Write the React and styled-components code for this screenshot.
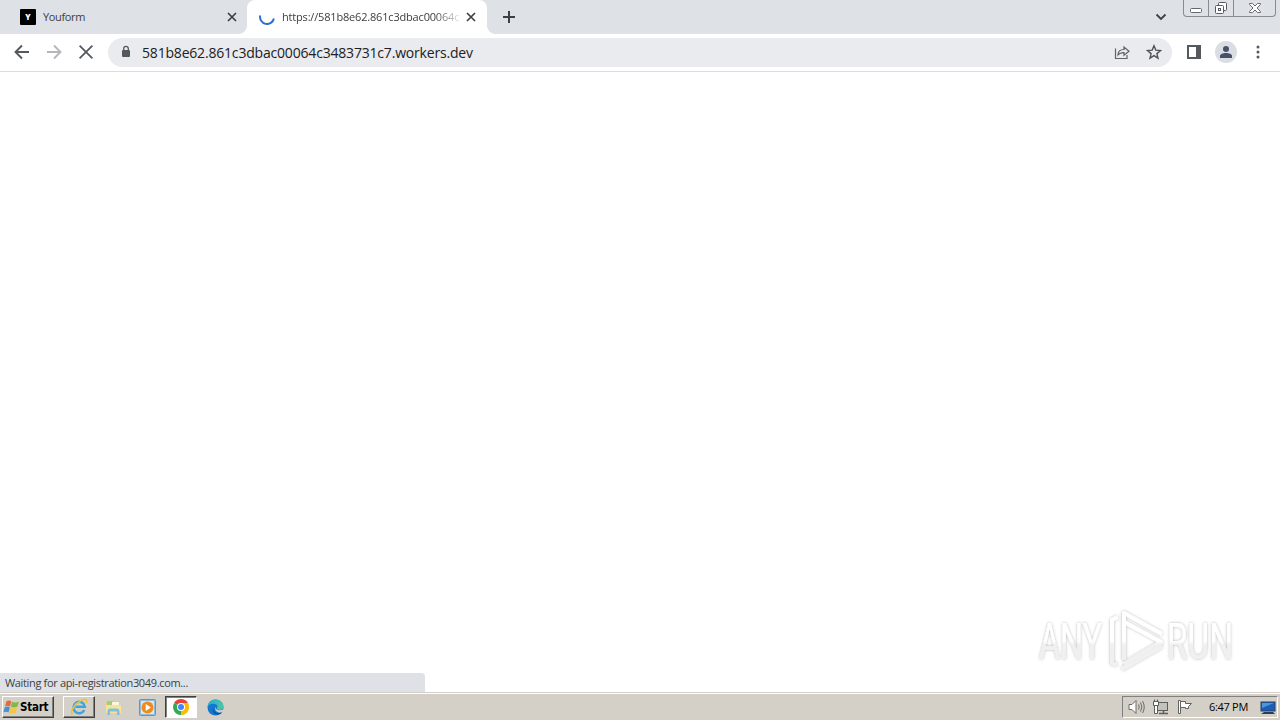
import styled, { createGlobalStyle } from 'styled-components';

const GlobalStyle = createGlobalStyle`
    * {
        box-sizing: border-box;
    }
    body {
        margin: 0;
        overflow: hidden;
        background: #fff;
        font-family: 'Open Sans', 'Noto Sans', sans-serif;
    }
    svg {
        display: block;
        flex: none;
    }
`;

const Screen = styled.div`
    position: relative;
    display: flex;
    flex-direction: column;
    width: 1280px;
    height: 720px;
    overflow: hidden;
    background: #fff;
`;

const TabStrip = styled.div`
    display: flex;
    height: 34px;
    background: #dee1e6;
`;

const Tab = styled.div`
    position: relative;
    display: flex;
    align-items: center;
    width: ${({ $active }) => ($active ? 240 : 247)}px;
    height: 34px;
    padding-left: ${({ $active }) => ($active ? 12 : 20)}px;
    padding-right: ${({ $active }) => ($active ? 11 : 10)}px;
    border-radius: 8px 8px 0 0;
    background: ${({ $active }) => ($active ? '#fff' : 'transparent')};
    &::before,
    &::after {
        content: '';
        display: ${({ $active }) => ($active ? 'block' : 'none')};
        position: absolute;
        bottom: 0;
        width: 8px;
        height: 8px;
    }
    &::before {
        left: -8px;
        background: radial-gradient(circle at 0 0, transparent 7.5px, #fff 8px);
    }
    &::after {
        right: -8px;
        background: radial-gradient(circle at 100% 0, transparent 7.5px, #fff 8px);
    }
`;

const TabTitle = styled.div`
    flex: 1;
    height: 16px;
    margin-left: 7px;
    margin-right: 7px;
    overflow: hidden;
    white-space: nowrap;
    font-size: 11px;
    line-height: 16px;
    letter-spacing: ${({ $spacing }) => $spacing}px;
    color: #3c4043;
    mask-image: ${({ $fade }) =>
        $fade ? 'linear-gradient(to right, #000 86%, transparent 102%)' : 'none'};
`;

const Favicon = styled.div`
    width: 16px;
    height: 16px;
    border-radius: 1px;
    background: #000;
    color: #fff;
    font-size: 8px;
    font-weight: 800;
    line-height: 16px;
    text-align: center;
`;

const NewTab = styled.div`
    display: flex;
    align-items: center;
    margin-left: 15px;
`;

const TabSearch = styled.div`
    display: flex;
    align-items: center;
    margin-left: auto;
    margin-right: 16px;
`;

const WindowControls = styled.div`
    display: flex;
    width: 93px;
    height: 17px;
    margin-right: 4px;
    border: 1px solid #878b93;
    border-top: 0;
    border-radius: 0 0 4px 4px;
`;

const WindowButton = styled.div`
    display: flex;
    align-items: center;
    justify-content: center;
    width: ${({ $width }) => $width}px;
    & + & {
        border-left: 1px solid #878b93;
    }
`;

const Toolbar = styled.div`
    display: flex;
    align-items: center;
    height: 38px;
    padding: 0 14px 1px;
    border-bottom: 1px solid #dadce0;
    background: #fff;
`;

const NavButtons = styled.div`
    display: flex;
    gap: 16px;
    margin-right: 14px;
`;

const Omnibox = styled.div`
    display: flex;
    align-items: center;
    width: 1064px;
    height: 29px;
    padding: 0 10px 0 12px;
    border-radius: 15px;
    background: #e9ebee;
`;

const Address = styled.div`
    flex: 1;
    margin-left: 10px;
    padding-top: 2px;
    white-space: nowrap;
    font-size: 14px;
    line-height: 20px;
    letter-spacing: -0.19px;
    color: #202124;
`;

const OmniActions = styled.div`
    display: flex;
    gap: 16px;
`;

const ToolbarActions = styled.div`
    display: flex;
    align-items: center;
    gap: 13px;
    margin-left: 14px;
`;

const Page = styled.div`
    display: flex;
    flex: 1;
    align-items: flex-end;
`;

const StatusBubble = styled.div`
    width: 425px;
    height: 19px;
    padding-left: 5px;
    border-top-right-radius: 4px;
    background: #dee1e6;
    color: #3c4043;
    font-size: 11px;
    line-height: 20px;
    letter-spacing: -0.34px;
`;

const Watermark = styled.svg`
    position: absolute;
    left: 1030px;
    top: 602px;
`;

const Taskbar = styled.div`
    display: flex;
    align-items: flex-start;
    height: 28px;
    padding: 2px 2px 0;
    border-top: 1px solid #d4d0c8;
    background: #d4d0c8;
    box-shadow: inset 0 1px #fff;
`;

const raised = `
    border: 1px solid;
    border-color: #fff #404040 #404040 #fff;
    box-shadow: inset -1px -1px #808080;
`;

const StartButton = styled.div`
    display: flex;
    align-items: center;
    width: 52px;
    height: 22px;
    margin-top: 1px;
    padding-left: 0;
    gap: 0;
    color: #000;
    font-family: 'DejaVu Sans Condensed', 'DejaVu Sans', sans-serif;
    font-stretch: condensed;
    font-size: 11.5px;
    font-weight: 700;
    letter-spacing: -0.25px;
    ${raised}
`;

const TaskButtons = styled.div`
    display: flex;
    gap: 2px;
    margin: 1px 0 0 9px;
`;

const TaskButton = styled.div`
    display: flex;
    align-items: center;
    justify-content: center;
    width: 32px;
    height: 22px;
    ${({ $state }) => $state === 'open' && raised}
    ${({ $state }) =>
        $state === 'pressed' &&
        `
        background: #fff;
        border: 1px solid;
        border-color: #404040 #fff #fff #404040;
        box-shadow: inset 1px 1px #808080;
    `}
`;

const Tray = styled.div`
    display: flex;
    align-items: center;
    width: 156px;
    height: 22px;
    margin: 1px 0 0 auto;
    padding-left: 5px;
    border: 1px solid;
    border-color: #808080 #fff #fff #808080;
`;

const TrayIcons = styled.div`
    display: flex;
    gap: 8px;
`;

const Clock = styled.div`
    width: 41px;
    margin: 0 10px 0 16px;
    white-space: nowrap;
    color: #000;
    font-size: 11px;
    line-height: 20px;
    letter-spacing: -0.3px;
`;

const CloseIcon = ({ size = 10, color = '#3c4043', width = 1.7 }) => (
    <svg width={size} height={size} viewBox="0 0 10 10">
        <path d="M1 1l8 8M9 1L1 9" stroke={color} strokeWidth={width} fill="none" />
    </svg>
);

const ArrowIcon = ({ color, forward }) => (
    <svg width="16" height="16" viewBox="0 0 16 16">
        <path
            d={forward ? 'M1 8h13M8 1.5L14.5 8 8 14.5' : 'M15 8H2M8 1.5L1.5 8 8 14.5'}
            stroke={color}
            strokeWidth="1.9"
            fill="none"
        />
    </svg>
);

const IeIcon = () => (
    <svg width="18" height="18" viewBox="0 0 18 18">
        <path
            d="M14.3 12a5.700 5.700 0 1 1 .5-3.300H5.200"
            fill="none"
            stroke="#3fa4dc"
            strokeWidth="2.5"
        />
        <path
            d="M2.500 16.500C-.5 13.500 5 5.500 11.500 2.200c4.800-2 5.900-.3 4.700 2.800"
            fill="none"
            stroke="#e8c23e"
            strokeWidth="1.600"
        />
    </svg>
);

const FolderIcon = () => (
    <svg width="17" height="17" viewBox="0 0 17 17">
        <path d="M1 3.500l1-1.500h13v12H1z" fill="#e8cb6c" />
        <path d="M2 2h6v4H2z" fill="#9fce7c" />
        <path d="M7 3h7v4H7z" fill="#fbf7da" />
        <path d="M1 6h15v8H1z" fill="#f5e39a" />
        <path d="M2.500 16v-3.500q0-3 3-3h6q3 0 3 3V16h-2.500v-3.500h-7V16z" fill="#7fbfdf" />
    </svg>
);

const MediaIcon = () => (
    <svg width="17" height="17" viewBox="0 0 17 17">
        <rect x=".5" y=".5" width="16" height="16" rx="1" fill="#8ebce0" stroke="#6096c5" />
        <rect x="2" y="2" width="13" height="13" fill="#d4e8f5" />
        <circle cx="8.5" cy="8.5" r="6" fill="#f08a18" />
        <path d="M6.7 5v7l5.2-3.5z" fill="#fff" />
    </svg>
);

const ChromeIcon = () => (
    <svg width="16" height="16" viewBox="0 0 16 16">
        <path d="M8 8L1.1 4A8 8 0 0 1 14.9 4z" fill="#ea4335" />
        <path d="M8 8l6.9-4A8 8 0 0 1 8 16z" fill="#fbbc05" />
        <path d="M8 8v8A8 8 0 0 1 1.1 4z" fill="#34a853" />
        <path d="M8 4h6.9A8 8 0 0 1 8 16l3.500-6z" fill="#fbbc05" />
        <circle cx="8" cy="8" r="4" fill="#fff" />
        <circle cx="8" cy="8" r="3" fill="#4285f4" />
    </svg>
);

const EdgeIcon = () => (
    <svg width="17" height="17" viewBox="0 0 17 17">
        <defs>
            <linearGradient id="edgeTop" x1="0" y1="0" x2="1" y2=".3">
                <stop offset="0" stopColor="#26a9df" />
                <stop offset="1" stopColor="#4cc5a0" />
            </linearGradient>
        </defs>
        <circle cx="8.5" cy="8.5" r="8" fill="#1578cf" />
        <path
            d="M.5 8.500C.5 4 4 .5 8.500.5s8 3.200 8 6.500c0 2.600-2 4-4.200 4-2 0-2.600-.6-2.600-1.200 0-.5.8-.9.8-2.200C10.500 5.800 8.500 4.800 6.500 4.800 3 4.800 1 6.500.5 8.500z"
            fill="url(#edgeTop)"
        />
        <path d="M6.500 8c-1 4 2 6.500 5.500 6 1.500-.2 2.500-.8 3.500-1.500l-.8 1.600C10.500 17.500 3.500 14.500 6.500 8z" fill="#0c4f9e" />
        <path d="M8.800 7.500c-1 3.500 3.500 5 7.700 2.700l-.9 2.800C11.500 14.800 6.500 12 8.800 7.500z" fill="#d4d0c8" />
    </svg>
);

const WindowsFlag = () => (
    <svg width="17" height="17" viewBox="0 0 17 16">
        <path d="M3.500 1.700Q6 .3 8.400 1.900L7 7Q4.500 5.700 2 7z" fill="#e8683a" />
        <path d="M9.100 2.300Q12 3.700 16 2.300L14.400 7.300Q10.800 8.700 7.700 7.300z" fill="#84b84a" />
        <path d="M1.800 7.700Q4.500 6.300 6.900 7.900L5.500 13Q3 11.700.3 13z" fill="#4a8fd0" />
        <path d="M7.500 8.200Q10.500 9.600 14.100 8.200L12.600 13.500Q9.500 14.900 6.200 13.500z" fill="#f4c740" />
    </svg>
);

const SpeakerIcon = () => (
    <svg width="17" height="16" viewBox="0 0 17 16" fill="none" stroke="#6a6a68">
        <path d="M1 5.500h3l4-4v13l-4-4H1z" fill="#fff" />
        <path d="M10.500 5.500q1.500 2.500 0 5M12.500 3.500q2.800 4.500 0 9M14.500 2q3.500 6 0 12" />
    </svg>
);

const NetworkIcon = () => (
    <svg width="16" height="16" viewBox="0 0 16 16" fill="none" stroke="#5d5d5b">
        <rect x="4.500" y="3.500" width="10" height="8" fill="#c4c2bc" />
        <path d="M6 14.500h9M10.500 12v2" strokeWidth="1.500" />
        <path d="M.5 2.500h5v4h-5zM1.500 .5v2M4.500 .5v2M1.500 7v7.500h3V7" fill="#fff" />
    </svg>
);

const FlagIcon = () => (
    <svg width="16" height="16" viewBox="0 0 16 16" fill="none" stroke="#62625f">
        <path d="M1.500 1.500h2v13h-2z" fill="#fff" />
        <path d="M3.500 2.500h5v2h6l-3 3v2h-3v-1h-5z" fill="#fff" />
    </svg>
);

const DisplayIcon = () => (
    <svg width="16" height="15" viewBox="0 0 16 15">
        <rect x="1" y="2" width="14" height="9" fill="#1b5eb8" stroke="#254260" />
        <path d="M2 3h12L2 8z" fill="#4e95df" />
        <path d="M4 12h9l2 2H1z" fill="#293e57" />
    </svg>
);

const Tabs = () => (
    <TabStrip>
        <Tab>
            <Favicon>Y</Favicon>
            <TabTitle $spacing={-0.35}>Youform</TabTitle>
            <CloseIcon />
        </Tab>
        <Tab $active>
            <svg width="16" height="16" viewBox="0 0 16 16">
                <path d="M1.200 6.500A7 7 0 1 0 14.900 9.500" fill="none" stroke="#2c6fce" strokeWidth="2" />
            </svg>
            <TabTitle $spacing={-0.18} $fade>
                https://581b8e62.861c3dbac00064c3483731c7.workers.dev
            </TabTitle>
            <CloseIcon />
        </Tab>
        <NewTab>
            <svg width="14" height="14" viewBox="0 0 14 14">
                <path d="M7 1v12M1 7h12" stroke="#3c4043" strokeWidth="2" />
            </svg>
        </NewTab>
        <TabSearch>
            <svg width="12" height="8" viewBox="0 0 12 8">
                <path d="M1.500 1.500L6 6l4.500-4.500" fill="none" stroke="#3c4043" strokeWidth="1.800" />
            </svg>
        </TabSearch>
        <WindowControls>
            <WindowButton $width={24}>
                <svg width="12" height="16" viewBox="0 0 12 16">
                    <rect x=".5" y="8.500" width="11" height="4" rx="1" fill="#fff" stroke="#656a72" />
                </svg>
            </WindowButton>
            <WindowButton $width={25}>
                <svg width="14" height="16" viewBox="0 0 14 16" fill="none" stroke="#565b63">
                    <rect x="4.500" y="2.500" width="8" height="8" rx="1" fill="#fff" />
                    <rect x="1.500" y="5.500" width="8" height="8" rx="1" fill="#fff" />
                    <rect x="4.500" y="8.500" width="2" height="2" />
                </svg>
            </WindowButton>
            <WindowButton $width={42}>
                <svg width="12" height="16" viewBox="0 0 12 16">
                    <path
                        d="M.5 3.500h3L6 6l2.500-2.500h3v1L8 8l3.500 3.500v1h-3L6 10l-2.500 2.500h-3v-1L4 8 .5 4.500z"
                        fill="#fff"
                        stroke="#656a72"
                    />
                </svg>
            </WindowButton>
        </WindowControls>
    </TabStrip>
);

const AddressBar = () => (
    <Toolbar>
        <NavButtons>
            <ArrowIcon color="#55585c" />
            <ArrowIcon color="#b5b7ba" forward />
            <CloseIcon size={16} color="#55585c" width={1.1} />
        </NavButtons>
        <Omnibox>
            <svg width="12" height="14" viewBox="0 0 12 14">
                <rect x="2" y="5" width="8" height="7" rx="1" fill="#55585c" />
                <path d="M3.700 5.500V3.600a2.300 2.300 0 0 1 4.600 0v1.900" fill="none" stroke="#55585c" strokeWidth="1.300" />
            </svg>
            <Address>581b8e62.861c3dbac00064c3483731c7.workers.dev</Address>
            <OmniActions>
                <svg width="16" height="16" viewBox="0 0 16 16" fill="none" stroke="#5f6368" strokeWidth="1.200">
                    <path d="M1.500 4.500v10h11.500V11" />
                    <path d="M4 11c0-3.700 2.300-5.500 6-5.500V3l5 4.200-5 4V8.700C7.500 8.700 5.500 9 4 11z" />
                </svg>
                <svg width="16" height="16" viewBox="0 0 16 16">
                    <path
                        d="M8 1.800l1.800 4.300 4.700.4-3.600 3.100 1.100 4.600L8 11.700l-4 2.500 1.100-4.600L1.500 6.500l4.700-.4z"
                        fill="none"
                        stroke="#4f5358"
                        strokeWidth="1.400"
                    />
                </svg>
            </OmniActions>
        </Omnibox>
        <ToolbarActions>
            <svg width="16" height="16" viewBox="0 0 16 16">
                <path d="M1 1h14v14H1zM3 3v10h7V3z" fill="#55585c" fillRule="evenodd" />
            </svg>
            <svg width="22" height="22" viewBox="0 0 22 22">
                <circle cx="11" cy="11" r="11" fill="#dadde2" />
                <circle cx="11" cy="8" r="3" fill="#45516b" />
                <path d="M5 17v-2c0-4 12-4 12 0v2z" fill="#45516b" />
            </svg>
            <svg width="16" height="16" viewBox="0 0 16 16" fill="#55585c">
                <circle cx="8" cy="3" r="1.500" />
                <circle cx="8" cy="8" r="1.500" />
                <circle cx="8" cy="13" r="1.500" />
            </svg>
        </ToolbarActions>
    </Toolbar>
);

const AnyRun = () => (
    <Watermark width="220" height="78" viewBox="0 0 220 78">
        <defs>
            <linearGradient id="mark" x1="0" y1="8" x2="0" y2="70" gradientUnits="userSpaceOnUse">
                <stop offset=".5" stopColor="#fff" />
                <stop offset=".56" stopColor="#f0f0f0" />
            </linearGradient>
            <filter id="glow" x="-10%" y="-20%" width="120%" height="140%">
                <feDropShadow dx="0" dy="0" stdDeviation="1.600" floodColor="#000" floodOpacity=".3" />
            </filter>
        </defs>
        <g filter="url(#glow)" fill="url(#mark)">
            <g fontFamily="Roboto, sans-serif" fontSize="50">
                <text x="9" y="57" textLength="63" lengthAdjust="spacingAndGlyphs">
                    ANY
                </text>
                <text x="137" y="57" textLength="66" lengthAdjust="spacingAndGlyphs">
                    RUN
                </text>
            </g>
            <g fill="none" stroke="url(#mark)" strokeWidth="4" strokeLinejoin="round">
                <path d="M94 58V11l38 21M94 20l37 20-37 22" />
                <path d="M88 15l-6 3v43l5 2" />
                <path d="M92 67l40-23" />
            </g>
        </g>
    </Watermark>
);

const App = () => {
    return (
        <>
            <GlobalStyle />
            <Screen>
                <Tabs />
                <AddressBar />
                <Page>
                    <StatusBubble>Waiting for api-registration3049.com...</StatusBubble>
                </Page>
                <Taskbar>
                    <StartButton>
                        <WindowsFlag />
                        Start
                    </StartButton>
                    <TaskButtons>
                        <TaskButton $state="open">
                            <IeIcon />
                        </TaskButton>
                        <TaskButton>
                            <FolderIcon />
                        </TaskButton>
                        <TaskButton>
                            <MediaIcon />
                        </TaskButton>
                        <TaskButton $state="pressed">
                            <ChromeIcon />
                        </TaskButton>
                        <TaskButton>
                            <EdgeIcon />
                        </TaskButton>
                    </TaskButtons>
                    <Tray>
                        <TrayIcons>
                            <SpeakerIcon />
                            <NetworkIcon />
                            <FlagIcon />
                        </TrayIcons>
                        <Clock>6:47 PM</Clock>
                        <DisplayIcon />
                    </Tray>
                </Taskbar>
                <AnyRun />
            </Screen>
        </>
    );
};

export default App;
